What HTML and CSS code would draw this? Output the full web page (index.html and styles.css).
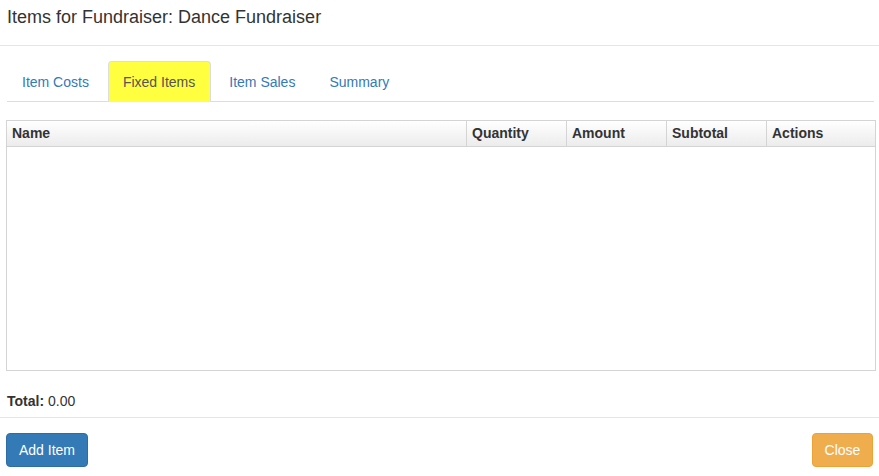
FILE: index.html
```html
<!DOCTYPE html>
<html>
<head>
<meta charset="utf-8">
<link rel="stylesheet" href="styles.css">
</head>
<body>
<div class="modal">
  <div class="modal-header">
    <h4 class="modal-title">Items for Fundraiser: Dance Fundraiser</h4>
  </div>
  <div class="modal-body">
    <ul class="nav-tabs">
      <li><a>Item Costs</a></li>
      <li class="active"><a>Fixed Items</a></li>
      <li><a>Item Sales</a></li>
      <li><a>Summary</a></li>
    </ul>
    <div class="grid">
      <div class="grid-head">
        <div class="col col-name">Name</div>
        <div class="col col-num">Quantity</div>
        <div class="col col-num">Amount</div>
        <div class="col col-num">Subtotal</div>
        <div class="col col-act">Actions</div>
      </div>
      <div class="grid-body"></div>
    </div>
    <div class="total"><b>Total:</b> 0.00</div>
  </div>
  <div class="modal-footer">
    <button class="btn btn-primary">Add Item</button>
    <button class="btn btn-warning">Close</button>
  </div>
</div>
</body>
</html>
```

FILE: styles.css
```css
* { box-sizing: border-box; }
html, body { margin: 0; padding: 0; background: #fff; }
body {
  font-family: "Liberation Sans", Arial, sans-serif;
  font-size: 14px;
  line-height: 1.42857;
  color: #333;
}
.modal { width: 879px; }
.modal-header {
  height: 46px;
  padding: 4px 7px 0;
  border-bottom: 1px solid #e5e5e5;
}
.modal-title {
  margin: 0;
  font-size: 18px;
  font-weight: normal;
  line-height: 26px;
}
.modal-body { padding: 15px 4px 0 6px; }
.nav-tabs {
  list-style: none;
  margin: 0 0 18px 1px;
  padding: 0;
  display: flex;
  border-bottom: 1px solid #ddd;
  width: 867px;
}
.nav-tabs li { margin-bottom: -1px; }
.nav-tabs a {
  display: block;
  padding: 10px 15px 9px 14px;
  margin-right: 3px;
  line-height: 20px;
  border: 1px solid transparent;
  border-radius: 4px 4px 0 0;
  color: #337ab7;
}
.nav-tabs .active a {
  color: #555;
  background: #ffff40;
  border-color: #ddd #ddd transparent;
}
.grid {
  width: 870px;
  border: 1px solid #d4d4d4;
}
.grid-head {
  display: flex;
  height: 26px;
  border-bottom: 1px solid #d4d4d4;
  background: linear-gradient(#ffffff, #ececec);
}
.col {
  font-size: 14px;
  font-weight: bold;
  line-height: 25px;
  padding-left: 5px;
  color: #333;
}
.col-name { width: 459px; }
.col-num { width: 100px; border-left: 1px solid #d4d4d4; }
.col-act { flex: 1; border-left: 1px solid #d4d4d4; }
.grid-body { height: 223px; }
.total {
  padding: 20px 0 6px 1px;
  line-height: 20px;
}
.modal-footer {
  border-top: 1px solid #e5e5e5;
  padding: 15px 6px 0 6px;
  display: flex;
  justify-content: space-between;
}
.btn {
  font-family: "Liberation Sans", Arial, sans-serif;
  font-size: 14px;
  line-height: 20px;
  padding: 6px 0;
  border: 1px solid transparent;
  border-radius: 4px;
  color: #fff;
  height: 34px;
  white-space: nowrap;
  text-align: center;
}
.btn-primary { background: #337ab7; border-color: #2e6da4; width: 82px; }
.btn-warning { background: #f0ad4e; border-color: #eea236; width: 61px; }
```
